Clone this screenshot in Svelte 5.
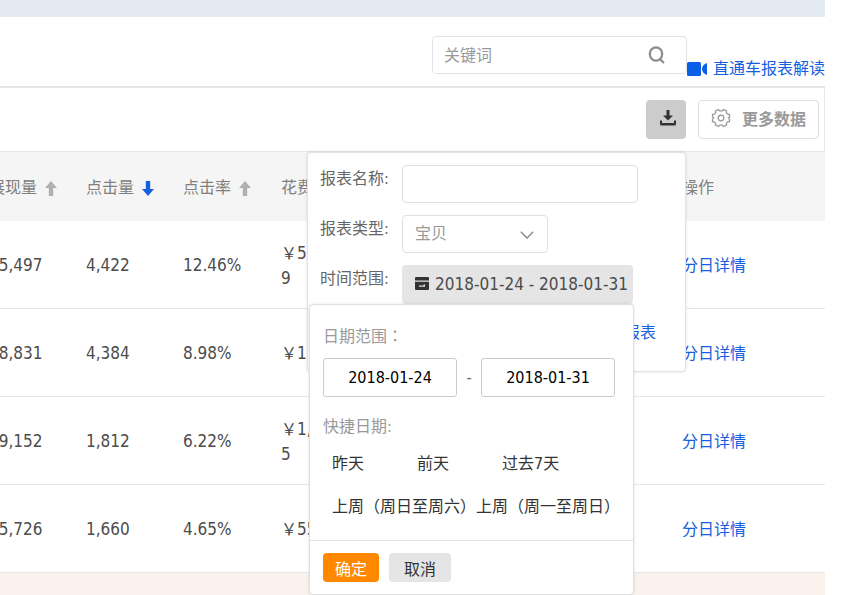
<script>
  const rows = [
    { views: '65,497', clicks: '4,422', rate: '12.46%', cost: ['5', '9'] },
    { views: '48,831', clicks: '4,384', rate: '8.98%', cost: ['1'] },
    { views: '29,152', clicks: '1,812', rate: '6.22%', cost: ['1,', '5'] },
    { views: '35,726', clicks: '1,660', rate: '4.65%', cost: ['55'] }
  ];
  const presets = ['昨天', '前天', '过去7天', '上周（周日至周六）', '上周（周一至周日）'];
  let keyword = $state('');
  let reportName = $state('');
  let start = $state('2018-01-24');
  let end = $state('2018-01-31');
</script>

{#snippet arrow(down)}
  <svg class="arrow" class:down viewBox="0 0 12 15" width="12" height="15" aria-hidden="true">
    <path d="M6 0 12 7H8.200V15H3.800V7H0Z" fill="currentColor" />
  </svg>
{/snippet}

<main class="page">
  <div class="strip"></div>

  <header class="top">
    <div class="search">
      <input type="text" placeholder="关键词" aria-label="关键词" bind:value={keyword} />
      <button type="button" aria-label="搜索">
        <svg viewBox="0 0 18 18" width="18" height="18" fill="none" stroke="#8c8c8c" stroke-width="2.200">
          <ellipse cx="8" cy="8" rx="6.200" ry="6.700" />
          <path d="M11.500 12.500 16 17" />
        </svg>
      </button>
    </div>
    <a class="guide" href="#guide">
      <svg viewBox="0 0 21 14" width="21" height="14" fill="#0a5fe6" aria-hidden="true">
        <rect x="0" y="0" width="14" height="14" rx="1.500" />
        <path d="M20 1V13C17 12 15 10 15 7S17 2 20 1Z" />
      </svg>
      <span>直通车报表解读</span>
    </a>
  </header>

  <section class="toolbar">
    <div class="download">
      <button type="button" class="download-btn" aria-label="下载报表">
        <svg viewBox="0 0 16 16" width="16" height="16" fill="#333" aria-hidden="true">
          <path d="M6.500 0h3v5.500H13L8 10.500 3 5.500h3.500Z" />
          <path d="M0 10.500h2V13h12v-2.500h2V14q0 1.500-1.500 1.500h-13Q0 15.500 0 14Z" />
        </svg>
      </button>

      <form class="panel" onsubmit={(e) => e.preventDefault()}>
        <div class="field">
          <label for="report-name">报表名称:</label>
          <input id="report-name" class="name" type="text" bind:value={reportName} />
        </div>
        <div class="field">
          <label for="report-type">报表类型:</label>
          <div class="select">
            <select id="report-type"><option>宝贝</option></select>
            <svg viewBox="0 0 14 8" width="14" height="8" fill="none" stroke="#8c8c8c" stroke-width="1.500" aria-hidden="true">
              <path d="M.8.8 7 7 13.200.8" />
            </svg>
          </div>
        </div>
        <div class="field">
          <label for="report-range">时间范围:</label>
          <div class="range-wrap">
            <button id="report-range" type="button" class="range">
              <svg viewBox="0 0 14 13" width="14" height="13" fill="#333" aria-hidden="true">
                <path d="M1 0h12q1 0 1 1v2.500H0V1Q0 0 1 0Z" />
                <path fill-rule="evenodd" d="M0 4.800h14V12q0 1-1 1H1q-1 0-1-1ZM4 8.500h4.500V7.500H10v2.300H4Z" />
              </svg>
              <span>{start} - {end}</span>
            </button>

            <div class="picker">
              <div class="picker-body">
                <p>日期范围<span class="colon">：</span></p>
                <div class="dates">
                  <input type="text" aria-label="开始日期" bind:value={start} />
                  <span>-</span>
                  <input type="text" aria-label="结束日期" bind:value={end} />
                </div>
                <p>快捷日期:</p>
                <ul>
                  {#each presets as preset}
                    <li><button type="button">{preset}</button></li>
                  {/each}
                </ul>
              </div>
              <div class="picker-foot">
                <button type="button" class="ok">确定</button>
                <button type="button" class="cancel">取消</button>
              </div>
            </div>
          </div>
        </div>
        <a class="submit" href="#download">下载报表</a>
      </form>
    </div>

    <button type="button" class="more">
      <svg viewBox="0 0 20 20" width="20" height="20" fill="none" stroke="#999" stroke-width="1.300" aria-hidden="true">
        <path d="M7.500 1.500 8.500 2.800H11.500L12.500 1.500 15.500 2.800 15.300 4.700 17 6.200 18.500 6.500V9L17.300 10 18.500 11V13.500L17 13.800 15.300 15.300 15.500 17.200 12.500 18.500 11.500 17.200H8.500L7.500 18.500 4.500 17.200 4.700 15.300 3 13.800 1.500 13.500V11L2.700 10 1.500 9V6.500L3 6.200 4.700 4.700 4.500 2.800Z" stroke-linejoin="round" />
        <circle cx="10" cy="10" r="2.800" />
      </svg>
      <span>更多数据</span>
    </button>
  </section>

  <div class="table-wrap">
    <table>
      <colgroup>
        <col class="c-views" /><col class="c-clicks" /><col class="c-rate" /><col class="c-cost" /><col class="c-action" />
      </colgroup>
      <thead>
        <tr>
          <th>展现量{@render arrow(false)}</th>
          <th>点击量{@render arrow(true)}</th>
          <th>点击率{@render arrow(false)}</th>
          <th>花费</th>
          <th>操作</th>
        </tr>
      </thead>
      <tbody>
        {#each rows as row}
          <tr>
            <td>{row.views}</td>
            <td>{row.clicks}</td>
            <td>{row.rate}</td>
            <td>
              {#each row.cost as line, i}
                <div>{#if i === 0}<span class="yen">￥</span>{/if}{line}</div>
              {/each}
            </td>
            <td><a href="#daily">分日详情</a></td>
          </tr>
        {/each}
      </tbody>
      <tfoot>
        <tr><td colspan="5"></td></tr>
      </tfoot>
    </table>
  </div>
</main>

<style>
  :global(body) {
    margin: 0;
    background: #fff;
  }
  .page,
  .page :is(input, button, select) {
    font-family: 'DejaVu Sans Condensed', 'Noto Sans CJK SC', sans-serif;
    font-size: 16px;
  }
  .page {
    box-sizing: border-box;
    height: 100vh;
    overflow: hidden;
    padding-right: 40px;
    line-height: 24px;
    color: #4c4c4c;
  }
  .page * {
    box-sizing: border-box;
  }
  button {
    border: 0;
    padding: 0;
    background: none;
    color: inherit;
    cursor: pointer;
  }
  input,
  select {
    border: 1px solid #e0e0e4;
    border-radius: 4px;
    background: #fff;
    outline: none;
  }
  a {
    color: #1560e0;
    text-decoration: none;
  }
  svg {
    flex: none;
  }
  .strip {
    height: 17px;
    background: #e3eaf2;
  }
  .top {
    display: flex;
    justify-content: flex-end;
    align-items: flex-start;
    padding: 19px 0 5px;
  }
  .search {
    display: flex;
    width: 255px;
    height: 38px;
    border: 1px solid #e0e3ea;
    border-radius: 4px;
  }
  .search input {
    flex: 1;
    min-width: 0;
    border: 0;
    padding: 0 11px;
    color: #666;
  }
  .search input::placeholder {
    color: #999;
    opacity: 1;
  }
  .search button {
    display: flex;
    align-items: center;
    justify-content: center;
    width: 58px;
  }
  .guide {
    display: flex;
    align-items: center;
    gap: 5px;
    padding-top: 21px;
  }
  .toolbar {
    display: flex;
    justify-content: flex-end;
    gap: 12px;
    padding: 12px 5px 12px 0;
    border: solid #e6e6e6;
    border-width: 2px 1px 1px 0;
  }
  .download {
    position: relative;
  }
  .download-btn {
    display: flex;
    align-items: center;
    justify-content: center;
    width: 40px;
    height: 39px;
    padding: 0 0 4px 3px;
    border-radius: 4px;
    background: #ccc;
  }
  .more {
    display: flex;
    align-items: center;
    justify-content: center;
    gap: 11px;
    width: 121px;
    height: 39px;
    padding-bottom: 3px;
    border: 1px solid #e0e0e4;
    border-radius: 4px;
    color: #999;
    font-weight: bold;
  }
  .panel {
    position: absolute;
    z-index: 2;
    top: 52px;
    right: 0;
    width: 379px;
    padding: 12px 12px 20px;
    border: 1px solid #e3e3e3;
    border-radius: 4px;
    background: #fff;
    box-shadow: 0 0 3px rgb(0 0 0 / 12%);
    color: #666;
  }
  .field {
    display: flex;
    align-items: flex-start;
    height: 38px;
    margin-bottom: 12px;
  }
  .field label {
    width: 82px;
    line-height: 28px;
  }
  .name {
    width: 236px;
    height: 38px;
    padding: 0 10px;
  }
  .select {
    position: relative;
    width: 146px;
  }
  .select select {
    appearance: none;
    width: 100%;
    height: 38px;
    padding: 0 12px 2px;
    color: #999;
  }
  .select svg {
    position: absolute;
    right: 14px;
    top: 16px;
    pointer-events: none;
  }
  .range-wrap {
    position: relative;
  }
  .page .range {
    display: flex;
    align-items: center;
    gap: 6px;
    width: 231px;
    height: 39px;
    padding: 0 0 2px 13px;
    border-radius: 4px;
    background: #e5e5e5;
    color: #4c4c4c;
    font-size: 17px;
    white-space: nowrap;
  }
  .submit {
    display: block;
    padding-right: 17px;
    text-align: right;
    line-height: 36px;
  }
  .picker {
    position: absolute;
    top: 39px;
    right: -1px;
    width: 325px;
    border: 1px solid #e0e0e0;
    border-radius: 4px;
    background: #fff;
    box-shadow: 0 0 3px rgb(0 0 0 / 12%);
    color: #333;
  }
  .picker-body {
    padding: 20px 0 12px 13px;
    border-bottom: 1px solid #e3e3e3;
  }
  .picker p {
    margin: 0;
    color: #999;
  }
  .colon {
    font-family: 'Noto Sans CJK TC', sans-serif;
    line-height: 1;
  }
  .dates {
    display: flex;
    align-items: center;
    margin: 9px 0 18px;
  }
  .dates input {
    width: 134px;
    height: 39px;
    border-color: #ccc;
    border-radius: 3px;
    padding: 0;
    text-align: center;
    color: #000;
  }
  .dates span {
    width: 24px;
    text-align: center;
    color: #666;
  }
  .picker ul {
    display: flex;
    flex-wrap: wrap;
    margin: 3px 0 0;
    padding: 0 0 0 9px;
    list-style: none;
  }
  .picker li {
    min-width: 85px;
    line-height: 43px;
  }
  .picker li button {
    line-height: 24px;
    white-space: nowrap;
  }
  .picker-foot {
    display: flex;
    gap: 10px;
    padding: 12px 13px;
  }
  .picker-foot button {
    height: 29px;
    border-radius: 4px;
  }
  .picker-foot .ok {
    width: 56px;
    background: #ff8800;
    color: #fff;
  }
  .picker-foot .cancel {
    width: 62px;
    background: #e5e5e5;
  }
  .table-wrap {
    overflow: hidden;
  }
  table {
    width: calc(100% + 21px);
    margin-left: -21px;
    border-collapse: collapse;
    table-layout: fixed;
  }
  .c-views,
  .c-clicks {
    width: 97px;
  }
  .c-rate {
    width: 98px;
  }
  .c-action {
    width: 153px;
  }
  th {
    height: 69px;
    padding: 2px 0 0 10px;
    background: #f5f5f5;
    color: #808080;
    font-weight: normal;
    text-align: left;
    white-space: nowrap;
  }
  td {
    height: 88px;
    padding: 2px 0 0 10px;
    border-bottom: 1px solid #e6e6e6;
    font-size: 17px;
  }
  tbody tr:first-child td {
    height: 87px;
  }
  td a,
  .yen {
    font-size: 16px;
  }
  tfoot td {
    background: #faf1ec;
  }
  .arrow {
    margin-left: 8px;
    vertical-align: -3px;
    color: #b0b0b0;
  }
  .arrow.down {
    transform: rotate(180deg);
    color: #1560e0;
  }
</style>
